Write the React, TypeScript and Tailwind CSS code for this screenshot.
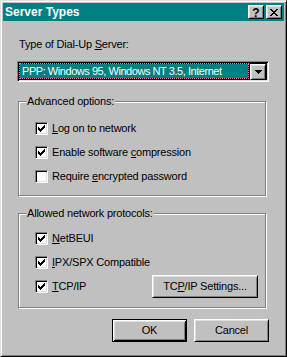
import React from "react";

const raised =
  "border border-t-white border-l-white border-r-black border-b-black shadow-[inset_1px_1px_#dfdfdf,inset_-1px_-1px_#808080]";

function Check() {
  const px: [number, number][] = [
    [6, 0],
    [5, 1], [6, 1],
    [0, 2], [4, 2], [5, 2], [6, 2],
    [0, 3], [1, 3], [3, 3], [4, 3], [5, 3],
    [0, 4], [1, 4], [2, 4], [3, 4], [4, 4],
    [1, 5], [2, 5], [3, 5],
    [2, 6],
  ];
  return (
    <svg width="7" height="7" viewBox="0 0 7 7" shapeRendering="crispEdges">
      {px.map(([x, y], i) => (
        <rect key={i} x={x} y={y} width="1" height="1" fill="#000" />
      ))}
    </svg>
  );
}

function CheckBox({ checked }: { checked: boolean }) {
  return (
    <div className="w-[13px] h-[13px] shrink-0 bg-white border border-t-[#808080] border-l-[#808080] border-r-white border-b-white shadow-[inset_1px_1px_#000,inset_-1px_-1px_#dfdfdf] flex items-center justify-center">
      {checked && <Check />}
    </div>
  );
}

function Row({
  checked,
  children,
}: {
  checked: boolean;
  children: React.ReactNode;
}) {
  return (
    <div className="flex items-center gap-[4px] h-[13px]">
      <CheckBox checked={checked} />
      <span className="leading-[13px] whitespace-nowrap">{children}</span>
    </div>
  );
}

function Group({
  title,
  pt,
  children,
}: {
  title: string;
  pt: string;
  children: React.ReactNode;
}) {
  return (
    <div
      className={`relative ml-[1px] mr-[3px] h-[95px] border border-[#808080] shadow-[1px_1px_0_#fff,inset_1px_1px_0_#fff] flex flex-col gap-[11px] pl-[16px] pr-[7px] ${pt}`}
    >
      <span className="absolute left-[7px] top-[-7px] px-[1px] bg-[#c0c0c0] leading-[13px] whitespace-nowrap">
        {title}
      </span>
      {children}
    </div>
  );
}

function CloseGlyph() {
  const rows = [
    "XX....XX",
    ".XX..XX.",
    "..XXXX..",
    "...XX...",
    "..XXXX..",
    ".XX..XX.",
    "XX....XX",
  ];
  return (
    <svg width="8" height="7" viewBox="0 0 8 7" shapeRendering="crispEdges">
      {rows.flatMap((r, y) =>
        r.split("").map((c, x) =>
          c === "X" ? <rect key={`${x}-${y}`} x={x} y={y} width="1" height="1" fill="#000" /> : null
        )
      )}
    </svg>
  );
}

function Arrow() {
  return (
    <svg width="7" height="4" viewBox="0 0 7 4" shapeRendering="crispEdges">
      <rect x="0" y="0" width="7" height="1" fill="#000" />
      <rect x="1" y="1" width="5" height="1" fill="#000" />
      <rect x="2" y="2" width="3" height="1" fill="#000" />
      <rect x="3" y="3" width="1" height="1" fill="#000" />
    </svg>
  );
}

export default function App() {
  return (
    <div
      className="w-[287px] h-[357px] bg-[#c0c0c0] border border-t-[#dfdfdf] border-l-[#dfdfdf] border-r-black border-b-black shadow-[inset_1px_1px_#fff,inset_-1px_-1px_#808080] p-[2px] text-[11px] tracking-[-0.2px] text-black flex flex-col"
      style={{ fontFamily: '"Liberation Sans", Arial, sans-serif' }}
    >
      {/* Title bar */}
      <div className="h-[18px] bg-[#008080] flex items-center pl-[2px] pr-[2px] shrink-0">
        <span className="text-white font-bold text-[12px] tracking-normal leading-[18px] flex-1">
          Server Types
        </span>
        <div className={`w-[16px] h-[14px] bg-[#c0c0c0] ${raised} flex items-center justify-center`}>
          <span className="font-bold text-[12px] leading-[12px] tracking-normal mt-[1px]">?</span>
        </div>
        <div className={`ml-[2px] w-[16px] h-[14px] bg-[#c0c0c0] ${raised} flex items-center justify-center`}>
          <CloseGlyph />
        </div>
      </div>

      {/* Body */}
      <div className="flex flex-col pl-[14px] pr-[15px]">
        <div className="mt-[17px] ml-[2px] h-[13px] leading-[13px]">
          Type of Dial-Up <u>S</u>erver:
        </div>

        {/* Combo */}
        <div className="mt-[10px] h-[21px] border border-t-[#808080] border-l-[#808080] border-r-white border-b-white shadow-[inset_1px_1px_#000,inset_-1px_-1px_#dfdfdf] p-[1px] flex bg-black">
          <div className="flex-1 bg-black flex mr-[1px] mb-[1px]">
            <div className="flex-1 bg-[#008080] bg-clip-padding border border-dotted border-[#ff7f7f] text-white leading-[15px] pl-[2px] tracking-[-0.45px] whitespace-nowrap">
              PPP: Windows 95, Windows NT 3.5, Internet
            </div>
          </div>
          <div className={`w-[16px] h-[16px] mt-[1px] mr-[1px] bg-[#c0c0c0] ${raised} flex items-center justify-center shrink-0`}>
            <Arrow />
          </div>
        </div>

        <div className="mt-[19px]">
          <Group title="Advanced options:" pt="pt-[20px]">
            <Row checked>
              <u>L</u>og on to network
            </Row>
            <Row checked>
              Enable software <u>c</u>ompression
            </Row>
            <Row checked={false}>
              Require <u>e</u>ncrypted password
            </Row>
          </Group>
        </div>

        <div className="mt-[17px]">
          <Group title="Allowed network protocols:" pt="pt-[18px]">
            <Row checked>
              <u>N</u>etBEUI
            </Row>
            <Row checked>
              <u>I</u>PX/SPX Compatible
            </Row>
            <div className="flex items-center h-[13px]">
              <Row checked>
                <u>T</u>CP/IP
              </Row>
              <div className="flex-1" />
              <div className={`w-[106px] h-[23px] bg-[#c0c0c0] ${raised} flex items-center justify-center whitespace-nowrap`}>
                TC<u>P</u>/IP Settings...
              </div>
            </div>
          </Group>
        </div>

        <div className="mt-[11px] flex justify-end gap-[7px]">
          <div className="w-[75px] h-[23px] bg-[#c0c0c0] border border-black shadow-[inset_1px_1px_#fff,inset_-1px_-1px_#000,inset_2px_2px_#dfdfdf,inset_-2px_-2px_#808080] flex items-center justify-center">
            OK
          </div>
          <div className={`w-[75px] h-[23px] bg-[#c0c0c0] ${raised} flex items-center justify-center`}>
            Cancel
          </div>
        </div>
      </div>
    </div>
  );
}
